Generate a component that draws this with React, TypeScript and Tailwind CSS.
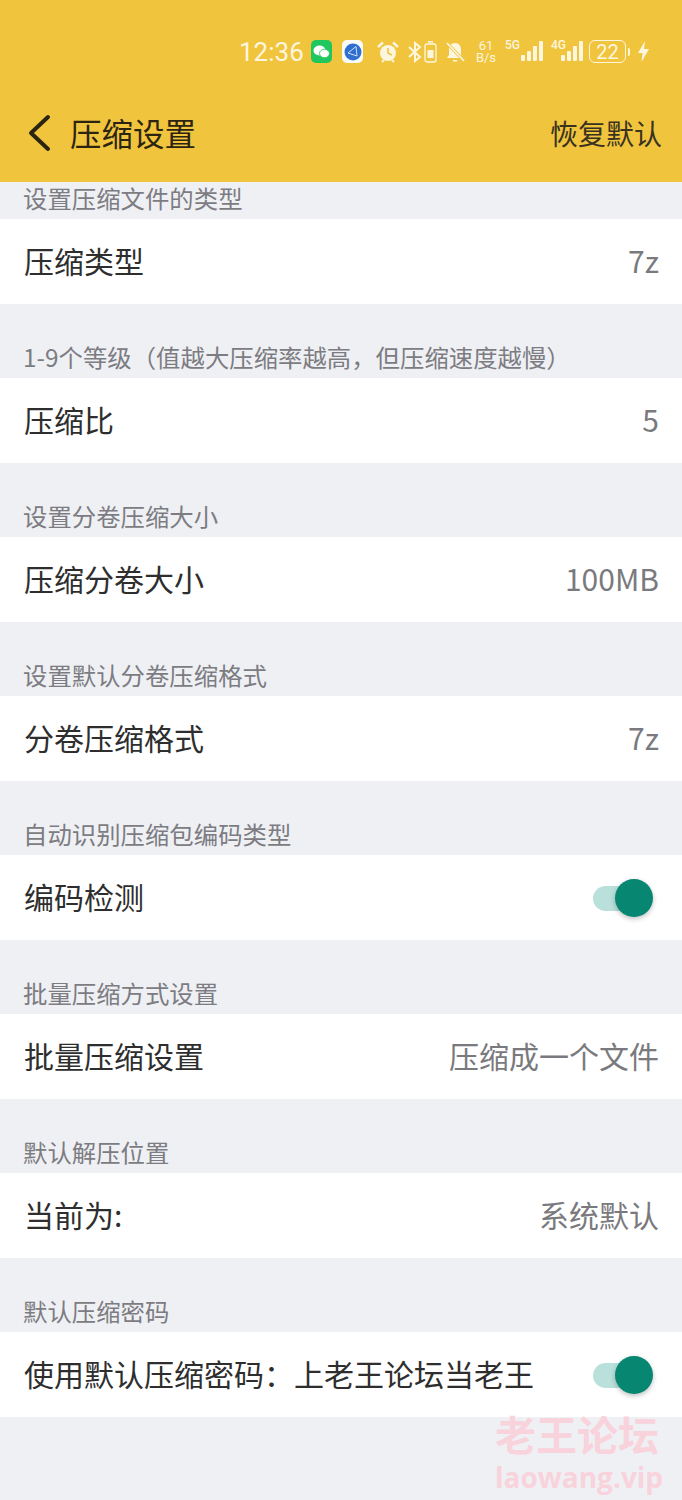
import React from 'react';

const cjk = { fontFamily: '"Noto Sans CJK SC", "Noto Sans", sans-serif' };
const latin = { fontFamily: 'Roboto, sans-serif' };

interface Section {
  caption: string;
  label: string;
  value?: string;
  toggle?: boolean;
}

const sections: Section[] = [
  { caption: '设置压缩文件的类型', label: '压缩类型', value: '7z' },
  { caption: '1-9个等级（值越大压缩率越高，但压缩速度越慢）', label: '压缩比', value: '5' },
  { caption: '设置分卷压缩大小', label: '压缩分卷大小', value: '100MB' },
  { caption: '设置默认分卷压缩格式', label: '分卷压缩格式', value: '7z' },
  { caption: '自动识别压缩包编码类型', label: '编码检测', toggle: true },
  { caption: '批量压缩方式设置', label: '批量压缩设置', value: '压缩成一个文件' },
  { caption: '默认解压位置', label: '当前为:', value: '系统默认' },
  { caption: '默认压缩密码', label: '使用默认压缩密码：上老王论坛当老王', toggle: true },
];

function Toggle() {
  return (
    <div className="relative w-[60px] h-[38px] shrink-0">
      <div className="absolute left-0 top-[7px] w-[52px] h-[25px] rounded-full bg-[#b9e0da]" />
      <div className="absolute left-[22px] top-0 w-[38px] h-[38px] rounded-full bg-[#078672] shadow-[0_2px_5px_rgba(0,0,0,0.25)]" />
    </div>
  );
}

function SignalBars() {
  return (
    <svg width="24" height="24" viewBox="0 0 24 24" fill="#fdf6df">
      <rect x="0" y="15" width="4" height="6" rx="1" />
      <rect x="6" y="11" width="4" height="10" rx="1" />
      <rect x="12" y="6" width="4" height="15" rx="1" />
      <rect x="18" y="1" width="4" height="20" rx="1" />
    </svg>
  );
}

function StatusBar() {
  return (
    <div className="h-[100px] flex items-center pl-[239px] pt-[3px] text-[#fdf6df]">
      <span className="text-[26px] leading-none w-[66px] shrink-0" style={latin}>12:36</span>
      {/* chat badge */}
      <div className="ml-[6px] w-[21px] h-[23px] rounded-[5px] bg-[#1fc75e] flex items-center justify-center">
        <svg width="17" height="14" viewBox="0 0 17 14" fill="#fff">
          <ellipse cx="6.5" cy="5.5" rx="6" ry="5" />
          <ellipse cx="11.5" cy="8.5" rx="5" ry="4.2" stroke="#1fc75e" strokeWidth="0.8" />
        </svg>
      </div>
      {/* browser badge */}
      <div className="ml-[10px] w-[21px] h-[23px] rounded-[5px] bg-[#fbfbf8] flex items-center justify-center">
        <svg width="18" height="18" viewBox="0 0 18 18">
          <circle cx="9" cy="9" r="8.5" fill="#2f6fd0" />
          <path d="M4 10L12 3.5L13 13Z" fill="none" stroke="#cfe0f7" strokeWidth="1" />
        </svg>
      </div>
      {/* alarm */}
      <svg className="ml-[14px]" width="22" height="24" viewBox="0 0 22 24" fill="none">
        <circle cx="11" cy="13" r="8" fill="#fdf6df" />
        <path d="M11 8V13L15 15" stroke="#f0c33c" strokeWidth="1.6" />
        <path d="M1 7L6 2.5M21 7L16 2.5" stroke="#fdf6df" strokeWidth="2.4" />
        <path d="M5 22L7 20M17 22L15 20" stroke="#fdf6df" strokeWidth="2" />
      </svg>
      {/* bluetooth */}
      <svg className="ml-[9px]" width="14" height="22" viewBox="0 0 14 22" fill="none" stroke="#fdf6df" strokeWidth="2">
        <path d="M1 6L12 16L7 20V2L12 6L1 16" />
      </svg>
      {/* power saver */}
      <svg className="ml-[2px]" width="13" height="24" viewBox="0 0 13 24" fill="none">
        <rect x="1" y="4" width="11" height="18" rx="2" stroke="#fdf6df" strokeWidth="1.3" />
        <rect x="4" y="1" width="5" height="1.6" fill="#fdf6df" />
        <rect x="3.5" y="10" width="6" height="8" fill="#fdf6df" />
      </svg>
      {/* muted bell */}
      <svg className="ml-[8px]" width="20" height="22" viewBox="0 0 20 22" fill="none">
        <path d="M10 2C6 2 4 5 4 9V14L2 17H18L16 14V9C16 5 14 2 10 2Z" fill="#fdf6df" />
        <path d="M8 19H12V20.5H8Z" fill="#fdf6df" />
        <path d="M2 2L19 20" stroke="#f0c33c" strokeWidth="3.2" />
        <path d="M2 2L19 20" stroke="#fdf6df" strokeWidth="1.8" />
      </svg>
      {/* network speed */}
      <div className="ml-[10px] w-[22px] flex flex-col items-center text-[13px] leading-[12px]" style={latin}>
        <span>61</span>
        <span>B/s</span>
      </div>
      {/* SIM 1 */}
      <div className="ml-[8px] relative w-[38px] h-[24px]">
        <span className="absolute left-0 -top-[1px] text-[12px] leading-[12px] font-medium" style={latin}>5G</span>
        <div className="absolute -right-[2px] top-0"><SignalBars /></div>
      </div>
      {/* SIM 2 */}
      <div className="ml-[8px] relative w-[32px] h-[24px]">
        <span className="absolute left-0 -top-[1px] text-[12px] leading-[12px] font-medium" style={latin}>4G</span>
        <div className="absolute right-[-2px] top-0"><SignalBars /></div>
      </div>
      {/* battery */}
      <div className="ml-[6px] w-[37px] h-[23px] rounded-[6px] border-[1.5px] border-[#fdf6df] flex items-center justify-center text-[20px] leading-none" style={latin}>22</div>
      <div className="ml-[2px] w-[2px] h-[8px] bg-[#fdf6df] rounded-r-sm" />
      <svg className="ml-[8px]" width="11" height="21" viewBox="0 0 11 21" fill="#fdf6df">
        <path d="M7 0L0 12H4.5L3.5 21L11 8H6Z" />
      </svg>
    </div>
  );
}

export default function App() {
  return (
    <div className="relative w-[682px] h-[1500px] overflow-hidden bg-[#eff0f4]" style={cjk}>
      <header className="h-[182px] bg-[#f1c43e]">
        <StatusBar />
        <div className="flex items-center h-[70px] pl-[27px] pr-[20px] pb-[4px]">
          <svg className="shrink-0" width="24" height="38" viewBox="0 0 24 38" fill="none" stroke="#2b2411" strokeWidth="4" strokeLinecap="round" strokeLinejoin="round">
            <path d="M21 3L4 19L21 35" />
          </svg>
          <h1 className="ml-[19px] text-[31.5px] leading-none text-[#2b2411] whitespace-nowrap">压缩设置</h1>
          <button className="ml-auto text-[28px] leading-none text-[#3a3320] whitespace-nowrap">恢复默认</button>
        </div>
      </header>

      <main>
        {sections.map((s, i) => (
          <section key={s.label}>
            <div className={i === 0 ? 'h-[37px] flex items-center px-[23px] pb-[5px]' : 'h-[74px] flex items-end pb-[6px] px-[23px]'}>
              <span className="text-[24.4px] leading-[30px] text-[#7c7c82] whitespace-nowrap">{s.caption}</span>
            </div>
            <div className="h-[85px] bg-white flex items-center justify-between pl-[24px] pr-[23px]">
              <span className="text-[30px] leading-none text-[#2e2e2e] whitespace-nowrap pb-[4px]">{s.label}</span>
              {s.toggle ? (
                <div className="mr-[6px]"><Toggle /></div>
              ) : (
                <span className="text-[30px] leading-none text-[#7a7a7e] whitespace-nowrap pb-[4px]">{s.value}</span>
              )}
            </div>
          </section>
        ))}
      </main>

      {/* forum watermark, stamped over the page corner */}
      <div className="absolute left-[495px] top-[1411px] w-[170px] pointer-events-none text-[#f9d3dc]">
        <div className="text-[41px] leading-[44px] font-bold whitespace-nowrap">老王论坛</div>
        <div className="text-[28px] leading-[30px] font-bold whitespace-nowrap mt-[7px]" style={{ fontFamily: '"Open Sans", sans-serif' }}>laowang.vip</div>
      </div>
    </div>
  );
}
